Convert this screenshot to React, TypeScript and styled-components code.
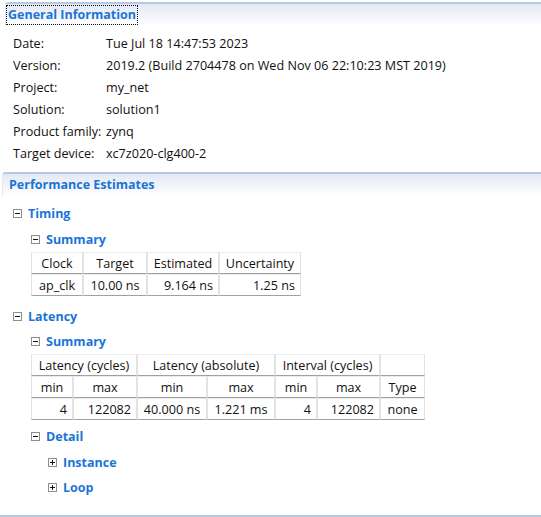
import React from "react";
import styled, { createGlobalStyle } from "styled-components";

const Global = createGlobalStyle`
  html, body { margin: 0; padding: 0; background: #fff; }
  body { font-family: "Open Sans", "Noto Sans", sans-serif; font-size: 12.6px; color: #111; }
`;

const Page = styled.div`
  width: 541px;
  height: 517px;
  padding: 2px 0 0 0;
  box-sizing: border-box;
  display: flex;
  flex-direction: column;
  overflow: hidden;
`;

const SectionHeader = styled.div<{ $tight?: boolean }>`
  height: 22px;
  margin-left: ${(p) => (p.$tight ? "2px" : "5px")};
  border-top: 2px solid #b6c9e2;
  border-left: 1px solid #e4eaf3;
  border-top-left-radius: 4px;
  background: linear-gradient(#e3e9f4, #ffffff);
  display: flex;
  align-items: center;
  padding-left: ${(p) => (p.$tight ? "5px" : "1px")};
`;

const HeaderTitle = styled.span<{ $focus?: boolean }>`
  font-weight: bold;
  font-size: 12.5px;
  color: #1b74d6;
  padding: 0 1px;
  line-height: 18px;
  outline: ${(p) => (p.$focus ? "1px dotted #111" : "none")};
`;

const InfoGrid = styled.div`
  display: grid;
  grid-template-columns: 93px auto;
  grid-auto-rows: 22px;
  padding: 6px 0 0 13px;
  align-items: center;
`;

const Cell = styled.span`
  white-space: nowrap;
`;

const PerfSection = styled.div`
  margin-top: 8px;
`;

const Tree = styled.div`
  display: flex;
  flex-direction: column;
  align-items: flex-start;
`;

const Node = styled.div<{ $indent: number; $top: number }>`
  display: flex;
  align-items: center;
  gap: 6px;
  margin-left: ${(p) => p.$indent}px;
  margin-top: ${(p) => p.$top}px;
  height: 18px;
`;

const Toggle = styled.span`
  width: 7px;
  height: 7px;
  border: 1px solid #8e8e8e;
  position: relative;
  display: inline-block;
  flex: none;
  &::before {
    content: "";
    position: absolute;
    left: 1px;
    top: 3px;
    width: 5px;
    height: 1px;
    background: #111;
  }
`;

const PlusToggle = styled(Toggle)`
  &::after {
    content: "";
    position: absolute;
    left: 3px;
    top: 1px;
    width: 1px;
    height: 5px;
    background: #111;
  }
`;

const NodeLabel = styled.span`
  font-weight: bold;
  font-size: 12.5px;
  color: #1b74d6;
`;

const Table = styled.table<{ $indent: number; $top: number }>`
  margin-left: ${(p) => p.$indent}px;
  margin-top: ${(p) => p.$top}px;
  border-collapse: separate;
  border-spacing: 0;
  table-layout: fixed;
  font-size: 12.6px;
`;

const Td = styled.td<{ $align?: string }>`
  box-sizing: border-box;
  height: 22px;
  padding: 0 5px;
  text-align: ${(p) => p.$align || "center"};
  border-top: 1px solid #ececec;
  border-left: 1px solid #e2e2e2;
  border-right: 1px solid #e2e2e2;
  border-bottom: 1px solid #a0a0a0;
  white-space: nowrap;
  overflow: visible;
`;

const BottomLine = styled.div`
  margin-top: auto;
  height: 2px;
  background: #b6c9e2;
`;

const info: [string, string][] = [
  ["Date:", "Tue Jul 18 14:47:53 2023"],
  ["Version:", "2019.2 (Build 2704478 on Wed Nov 06 22:10:23 MST 2019)"],
  ["Project:", "my_net"],
  ["Solution:", "solution1"],
  ["Product family:", "zynq"],
  ["Target device:", "xc7z020-clg400-2"],
];

const widths1 = [52, 64, 72, 82];
const widths2 = [42, 64, 70, 68, 42, 63, 45];

export default function App() {
  return (
    <Page>
      <Global />
      <SectionHeader>
        <HeaderTitle $focus>General Information</HeaderTitle>
      </SectionHeader>
      <InfoGrid>
        {info.map(([k, v]) => (
          <React.Fragment key={k}>
            <Cell>{k}</Cell>
            <Cell>{v}</Cell>
          </React.Fragment>
        ))}
      </InfoGrid>
      <PerfSection>
        <SectionHeader $tight>
          <HeaderTitle>Performance Estimates</HeaderTitle>
        </SectionHeader>
      </PerfSection>
      <Tree>
        <Node $indent={13} $top={8}>
          <Toggle />
          <NodeLabel>Timing</NodeLabel>
        </Node>
        <Node $indent={31} $top={8}>
          <Toggle />
          <NodeLabel>Summary</NodeLabel>
        </Node>
        <Table $indent={31} $top={4}>
          <colgroup>
            {widths1.map((w, i) => (
              <col key={i} style={{ width: w }} />
            ))}
          </colgroup>
          <tbody>
            <tr>
              <Td>Clock</Td>
              <Td>Target</Td>
              <Td>Estimated</Td>
              <Td>Uncertainty</Td>
            </tr>
            <tr>
              <Td>ap_clk</Td>
              <Td>10.00 ns</Td>
              <Td $align="right">9.164 ns</Td>
              <Td $align="right">1.25 ns</Td>
            </tr>
          </tbody>
        </Table>
        <Node $indent={13} $top={11}>
          <Toggle />
          <NodeLabel>Latency</NodeLabel>
        </Node>
        <Node $indent={31} $top={7}>
          <Toggle />
          <NodeLabel>Summary</NodeLabel>
        </Node>
        <Table $indent={31} $top={4}>
          <colgroup>
            {widths2.map((w, i) => (
              <col key={i} style={{ width: w }} />
            ))}
          </colgroup>
          <tbody>
            <tr>
              <Td colSpan={2}>Latency (cycles)</Td>
              <Td colSpan={2}>Latency (absolute)</Td>
              <Td colSpan={2}>Interval (cycles)</Td>
              <Td></Td>
            </tr>
            <tr>
              <Td>min</Td>
              <Td>max</Td>
              <Td>min</Td>
              <Td>max</Td>
              <Td>min</Td>
              <Td>max</Td>
              <Td>Type</Td>
            </tr>
            <tr>
              <Td $align="right">4</Td>
              <Td $align="right">122082</Td>
              <Td>40.000 ns</Td>
              <Td>1.221 ms</Td>
              <Td $align="right">4</Td>
              <Td $align="right">122082</Td>
              <Td>none</Td>
            </tr>
          </tbody>
        </Table>
        <Node $indent={31} $top={7}>
          <Toggle />
          <NodeLabel>Detail</NodeLabel>
        </Node>
        <Node $indent={48} $top={8}>
          <PlusToggle />
          <NodeLabel>Instance</NodeLabel>
        </Node>
        <Node $indent={48} $top={7}>
          <PlusToggle />
          <NodeLabel>Loop</NodeLabel>
        </Node>
      </Tree>
      <BottomLine />
    </Page>
  );
}
